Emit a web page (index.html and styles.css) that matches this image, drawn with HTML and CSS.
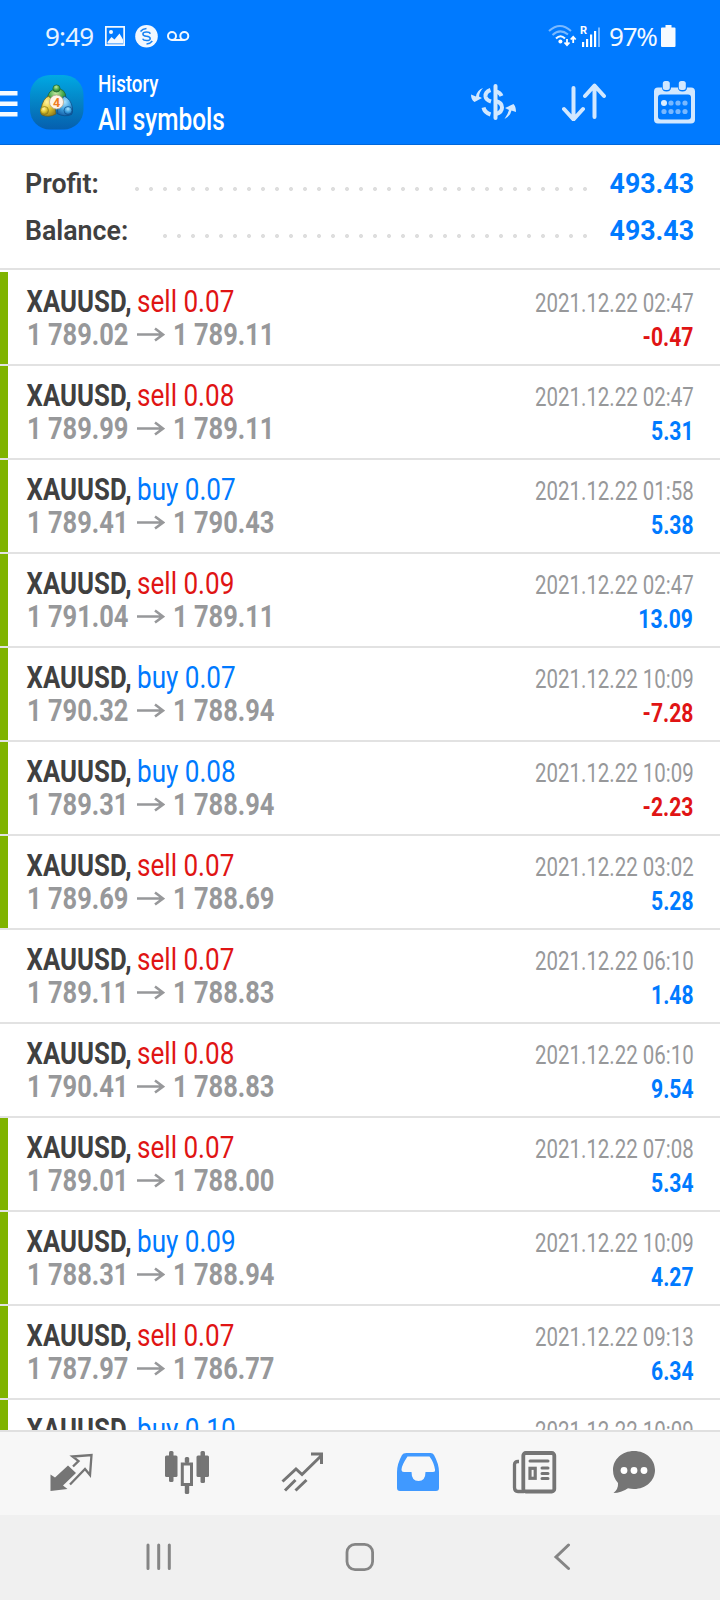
FILE: index.html
```html
<!DOCTYPE html>
<html lang="en">
<head>
<meta charset="utf-8">
<title>History</title>
<link rel="stylesheet" href="styles.css">
</head>
<body>
<svg width="0" height="0" class="defs"><defs>
<symbol id="arrow" viewBox="0 0 28 18"><path d="M0 8.500H26.500M18 2.500l8 6l-8 6" fill="none" stroke="#97989a" stroke-width="2.6"/></symbol>
<radialGradient id="gg" cx=".45" cy=".3" r=".8"><stop offset="0" stop-color="#c5eaa0"/><stop offset=".5" stop-color="#46a84a"/><stop offset="1" stop-color="#14632c"/></radialGradient>
<radialGradient id="gy" cx=".4" cy=".3" r=".8"><stop offset="0" stop-color="#fff2a0"/><stop offset=".5" stop-color="#dfc52f"/><stop offset="1" stop-color="#88741a"/></radialGradient>
<radialGradient id="gb" cx=".5" cy=".3" r=".8"><stop offset="0" stop-color="#a8e2ff"/><stop offset=".5" stop-color="#3c9fdd"/><stop offset="1" stop-color="#0c4f9a"/></radialGradient>
<linearGradient id="bg" x1="0" y1="0" x2="0" y2="1"><stop offset="0" stop-color="#00a9e4"/><stop offset=".5" stop-color="#0483c5"/><stop offset="1" stop-color="#065fae"/></linearGradient>
</defs></svg>
<header class="top">
  <div class="status">
    <span class="clock">9:49</span>
    <svg class="st-left" width="86" height="24" viewBox="0 0 86 24"><path fill="#f2f8ff" fill-rule="evenodd" d="M1 2h20v20h-20zM2.700 3.700v16.600h16.600v-16.600z"/><path fill="#f2f8ff" d="M3.500 18l4-5 3 2.500 5-6 3.500 6v4h-15.500z"/><circle cx="7" cy="8" r="2" fill="#f2f8ff"/><circle cx="42.500" cy="12.200" r="11.300" fill="#f2f8ff"/><path d="M46.300 9.800q-.6-1.800-3.800-1.800q-3.600 0-3.600 2t3.600 2.300t3.700 2.300t-3.700 2q-3 0-3.900-1.900M36.500 7.500q2-2.700 6-3M48.300 17q-2 2.700-5.800 3" fill="none" stroke="#1782f2" stroke-width="1.500"/><g fill="none" stroke="#f2f8ff" stroke-width="2"><circle cx="68" cy="12" r="4"/><circle cx="80.300" cy="12" r="4"/><path d="M68 16h12.300"/></g></svg>
    <svg class="st-right" width="54" height="24" viewBox="0 0 54 24"><g fill="none" stroke-width="2"><path stroke="#7ab9ff" d="M1 7q11-10 22 0M4.500 11q7.500-7 15.500-.5"/><path stroke="#f4f9ff" d="M8 14.500q4.500-4.500 9 0"/></g><circle cx="12.400" cy="17.500" r="2" fill="#fff"/><path d="M19 15v6M16.500 18.500l2.500 2.700 2.500-2.700M25.200 19v-6M22.700 15.500l2.500-2.700 2.500 2.700" fill="none" stroke="#fff" stroke-width="1.800"/><path fill="#fff" d="M34 18h2.200v5h-2.200zM38 15h2.200v8h-2.200zM42 10.500h2.200v12.500h-2.200zM46 7h2.200v16h-2.200z"/><path fill="#7ab9ff" d="M50 3.500h2v19.500h-2z"/><text x="32" y="10" class="roam">R</text></svg>
    <span class="pct">97%</span>
    <svg class="batt" width="15" height="22" viewBox="0 0 15 22"><path fill="#f6faff" d="M4.500 0h6v2.500h3q1 0 1 1v17.500q0 1-1 1h-12.500q-1 0-1-1v-17.500q0-1 1-1h3.500z"/></svg>
  </div>
  <div class="bar">
    <svg class="menu" width="18" height="28" viewBox="0 0 18 28"><path fill="#f5faff" d="M0 1h17.500v4.500h-17.500zM0 11.500h17.500v4.500h-17.500zM0 22h17.500v4.500h-17.500z"/></svg>
    <svg class="logo" width="54" height="55" viewBox="0 0 54 55"><rect width="53.500" height="54.500" rx="20" fill="url(#bg)"/><path d="M17.500 24q0-9 9-10t9.500 9l-4 5h-12z" fill="url(#gg)" stroke="#195f2c" stroke-width=".7"/><circle cx="26.500" cy="13.500" r="3.600" fill="url(#gg)" stroke="#195f2c" stroke-width=".6"/><path d="M19 21q-6 2-8 13q-1 5 1 6q7 3 14-1l-1-8z" fill="url(#gy)" stroke="#665c20" stroke-width=".7"/><circle cx="14.500" cy="35.500" r="4" fill="url(#gy)" stroke="#8a7a20" stroke-width=".7"/><path d="M34 21q7 3 8.500 12q.5 5-1 6.500q-7 3-14.500-1l1-7z" fill="url(#gb)" stroke="#0c4a86" stroke-width=".7"/><circle cx="38" cy="35.500" r="4" fill="url(#gb)" stroke="#0c4f8d" stroke-width=".7"/><circle cx="26.500" cy="27" r="7" fill="#fff4e8" stroke="#b9a68d" stroke-width=".8"/><text x="26.500" y="31.500" text-anchor="middle" class="four">4</text></svg>
    <div class="titles"><span class="t1">History</span><span class="t2">All symbols</span></div>
    <svg class="i-dollar" width="48" height="38" viewBox="0 0 48 38"><g fill="none" stroke="#d2e8ff" stroke-width="4"><path stroke-linecap="round" d="M25.500 3v32"/><path d="M20.500 7Q15 9 15.500 13.500Q16 17 21 18.500M25 8.500q5 .5 6.500 4.500M25.500 18q6.500 1.500 6.500 6.500T26 31M13.500 24.500q1 5 7 7"/></g><path fill="#d2e8ff" d="M13 5q-6 2-7 8.500L1 11.500q0 5.500 3.500 7.500l7.500-4l-3-1.500q0-4 4-8.500zM34.500 36q6-3 7-8.500l4.500 1.500q0-5.500-2.500-8l-8.500 4l4 2q-1 4-4.500 9z"/></svg>
    <svg class="i-sort" width="44" height="38" viewBox="0 0 44 38"><path d="M11.500 5v31M2 26l9.500 10.500l9.500-10.500M32.500 34v-31M23 13l9.500-10.500l9.500 10.500" fill="none" stroke="#d2e8ff" stroke-width="4" stroke-linecap="round" stroke-linejoin="round"/></svg>
    <svg class="i-cal" width="42" height="44" viewBox="0 0 42 44"><path fill="#d2e8ff" fill-rule="evenodd" d="M4 7.500h4q0 4 4.500 4t4.500-4h7q0 4 4.500 4t4.500-4h4q4 0 4 4v28q0 4-4 4h-33q-4 0-4-4v-28q0-4 4-4zM7 14.500q-3 0-3 3v19q0 3 3 3h27q3 0 3-3v-19q0-3-3-3z"/><rect x="8.800" y="1" width="7" height="9" rx="2.500" fill="#d2e8ff"/><rect x="24.800" y="1" width="7" height="9" rx="2.500" fill="#d2e8ff"/><g fill="#79b8ff"><circle cx="17" cy="23" r="2.600"/><circle cx="24" cy="23" r="2.600"/><circle cx="31" cy="23" r="2.600"/><circle cx="10" cy="31.500" r="2.600"/><circle cx="17" cy="31.500" r="2.600"/><circle cx="24" cy="31.500" r="2.600"/><circle cx="31" cy="31.500" r="2.600"/></g><circle cx="10" cy="23" r="3" fill="#dceeff"/></svg>
  </div>
</header>
<section class="summary">
  <div class="sum"><b>Profit:</b><i class="dots d1"></i><strong>493.43</strong></div>
  <div class="sum"><b>Balance:</b><i class="dots d2"></i><strong>493.43</strong></div>
</section>
<main class="list">
  <article class="deal mark"><div class="line"><span class="sym">XAUUSD,</span><span class="side neg">sell 0.07</span><time>2021.12.22 02:47</time></div><div class="line"><span class="from">1 789.02</span><svg class="arr"><use href="#arrow"/></svg><span class="to">1 789.11</span><span class="res neg">-0.47</span></div></article>
  <article class="deal mark"><div class="line"><span class="sym">XAUUSD,</span><span class="side neg">sell 0.08</span><time>2021.12.22 02:47</time></div><div class="line"><span class="from">1 789.99</span><svg class="arr"><use href="#arrow"/></svg><span class="to">1 789.11</span><span class="res">5.31</span></div></article>
  <article class="deal mark"><div class="line"><span class="sym">XAUUSD,</span><span class="side">buy 0.07</span><time>2021.12.22 01:58</time></div><div class="line"><span class="from">1 789.41</span><svg class="arr"><use href="#arrow"/></svg><span class="to">1 790.43</span><span class="res">5.38</span></div></article>
  <article class="deal mark"><div class="line"><span class="sym">XAUUSD,</span><span class="side neg">sell 0.09</span><time>2021.12.22 02:47</time></div><div class="line"><span class="from">1 791.04</span><svg class="arr"><use href="#arrow"/></svg><span class="to">1 789.11</span><span class="res">13.09</span></div></article>
  <article class="deal mark"><div class="line"><span class="sym">XAUUSD,</span><span class="side">buy 0.07</span><time>2021.12.22 10:09</time></div><div class="line"><span class="from">1 790.32</span><svg class="arr"><use href="#arrow"/></svg><span class="to">1 788.94</span><span class="res neg">-7.28</span></div></article>
  <article class="deal mark"><div class="line"><span class="sym">XAUUSD,</span><span class="side">buy 0.08</span><time>2021.12.22 10:09</time></div><div class="line"><span class="from">1 789.31</span><svg class="arr"><use href="#arrow"/></svg><span class="to">1 788.94</span><span class="res neg">-2.23</span></div></article>
  <article class="deal mark"><div class="line"><span class="sym">XAUUSD,</span><span class="side neg">sell 0.07</span><time>2021.12.22 03:02</time></div><div class="line"><span class="from">1 789.69</span><svg class="arr"><use href="#arrow"/></svg><span class="to">1 788.69</span><span class="res">5.28</span></div></article>
  <article class="deal"><div class="line"><span class="sym">XAUUSD,</span><span class="side neg">sell 0.07</span><time>2021.12.22 06:10</time></div><div class="line"><span class="from">1 789.11</span><svg class="arr"><use href="#arrow"/></svg><span class="to">1 788.83</span><span class="res">1.48</span></div></article>
  <article class="deal"><div class="line"><span class="sym">XAUUSD,</span><span class="side neg">sell 0.08</span><time>2021.12.22 06:10</time></div><div class="line"><span class="from">1 790.41</span><svg class="arr"><use href="#arrow"/></svg><span class="to">1 788.83</span><span class="res">9.54</span></div></article>
  <article class="deal mark"><div class="line"><span class="sym">XAUUSD,</span><span class="side neg">sell 0.07</span><time>2021.12.22 07:08</time></div><div class="line"><span class="from">1 789.01</span><svg class="arr"><use href="#arrow"/></svg><span class="to">1 788.00</span><span class="res">5.34</span></div></article>
  <article class="deal mark"><div class="line"><span class="sym">XAUUSD,</span><span class="side">buy 0.09</span><time>2021.12.22 10:09</time></div><div class="line"><span class="from">1 788.31</span><svg class="arr"><use href="#arrow"/></svg><span class="to">1 788.94</span><span class="res">4.27</span></div></article>
  <article class="deal mark"><div class="line"><span class="sym">XAUUSD,</span><span class="side neg">sell 0.07</span><time>2021.12.22 09:13</time></div><div class="line"><span class="from">1 787.97</span><svg class="arr"><use href="#arrow"/></svg><span class="to">1 786.77</span><span class="res">6.34</span></div></article>
  <article class="deal mark"><div class="line"><span class="sym">XAUUSD,</span><span class="side">buy 0.10</span><time>2021.12.22 10:09</time></div></article>
</main>
<nav class="tabs">
  <svg width="46" height="46" viewBox="0 0 46 46"><path fill="#757575" d="M2.500 24.500l4.500 3L20 15.500l8 7.500L15 35.500l4.500 3.500L2.500 41z"/><path d="M25 16.500l5.500-5.500-6-4.500L43.500 5 42 25l-5-6L22 34.500" fill="none" stroke="#757575" stroke-width="2.300"/></svg>
  <svg width="46" height="46" viewBox="0 0 46 46"><g fill="#757575"><rect x="1" y="5.500" width="12.500" height="21.500" rx="1.500"/><rect x="5" y="1" width="4.500" height="31" rx="1.500"/><rect x="32.500" y="5.500" width="12.500" height="21.500" rx="1.500"/><rect x="36.500" y="1" width="4.500" height="32" rx="1.500"/><rect x="20.800" y="7" width="4.400" height="6" rx="1.500"/><rect x="20.800" y="34" width="4.400" height="10" rx="1.500"/></g><rect x="18.300" y="14" width="9.200" height="20.500" fill="none" stroke="#757575" stroke-width="3"/></svg>
  <svg width="46" height="46" viewBox="0 0 46 46"><path d="M2.500 31.500L16 19l6 5.500L42 5M31 4h10.500v10M5 40.500L15.500 30M15.500 40.500L26.500 30" fill="none" stroke="#757575" stroke-width="3"/></svg>
  <svg width="46" height="46" viewBox="0 0 46 46"><path fill="#4099ff" fill-rule="evenodd" d="M10.500 3h24q2.500 0 3.500 2q5 9 5 17v16q0 3-3 3h-36q-3 0-3-3v-16q0-8 5-17q1-2 4.500-2zM11.500 6.500q-6 9-6 13q0 2.500 2.500 2.500h7.500q0 9 7 9t7-9h7.500q2.500 0 2-2.500q-1-7-5.500-13z"/></svg>
  <svg width="46" height="46" viewBox="0 0 46 46"><rect x="11.300" y="3" width="31" height="38.500" rx="2.500" fill="none" stroke="#757575" stroke-width="3.800"/><path d="M7 11.500H6q-3.500 0-3.500 3v23q0 4 3.500 4h6" fill="none" stroke="#757575" stroke-width="3.300"/><path d="M18 11h18M30 18h6M30 23.500h6M30 28.500h6" stroke="#757575" stroke-width="3" stroke-linecap="round"/><rect x="18" y="18.300" width="5.200" height="10" fill="none" stroke="#757575" stroke-width="3.200"/></svg>
  <svg width="46" height="46" viewBox="0 0 46 46"><path fill="#757575" d="M23 1c12 0 21 8.500 21 19s-9 19-21 19q-3 0-6-.8Q10 43 2.500 43q5-4 4.500-10Q2 27.500 2 20C2 9.500 11 1 23 1z"/><g fill="#fff"><circle cx="13" cy="20.500" r="3.400"/><circle cx="23" cy="20.500" r="3.400"/><circle cx="33" cy="20.500" r="3.400"/></g></svg>
</nav>
<footer class="sys">
  <svg width="28" height="28" viewBox="0 0 28 28"><path d="M3 2v23.500M13.700 2v23.500M24.300 2v23.500" stroke="#858585" stroke-width="3" stroke-linecap="round"/></svg>
  <svg width="30" height="30" viewBox="0 0 30 30"><rect x="2" y="2.300" width="25.600" height="25.300" rx="8" fill="none" stroke="#858585" stroke-width="2.800"/></svg>
  <svg class="back" width="18" height="28" viewBox="0 0 18 28"><path d="M15.500 2L3 14l12.500 11.500" fill="none" stroke="#858585" stroke-width="3" stroke-linecap="round"/></svg>
</footer>
</body>
</html>
```
FILE: styles.css
```css
* { box-sizing: border-box; }
body { margin: 0; width: 720px; height: 1600px; overflow: hidden; background: #fff; font-family: Roboto, "Liberation Sans", sans-serif; color: #404040; display: flex; flex-direction: column; }
.defs { position: absolute; }
svg { display: block; flex: none; }
.top { flex: none; height: 145px; background: #007aff; color: #fff; border-bottom: 1px solid #0068dc; }
.status { height: 72px; padding: 0 44px 0 45px; display: flex; align-items: center; }
.clock { width: 59px; font: 26px "Noto Sans", sans-serif; color: #e8f3ff; letter-spacing: -.8px; }
.st-right { margin-left: auto; }
.pct { width: 52px; margin-left: 7px; font: 26px "Noto Sans", sans-serif; letter-spacing: -1.2px; color: #f2f8ff; }
.roam { font: bold 11px Roboto; fill: #fff; }
.four { font: bold 12.500px Roboto; fill: #f07a20; }
.bar { height: 72px; display: flex; padding-right: 24px; }
.menu { margin-top: 18px; }
.logo { margin: 3px 0 0 11.500px; }
.titles { width: 160px; margin-left: 14.500px; display: flex; flex-direction: column; align-items: flex-start; }
.titles span { transform: scaleX(.8); transform-origin: 0 0; white-space: nowrap; font-weight: 500; }
.t1 { font-size: 23.500px; line-height: 25px; }
.t2 { font-size: 30.500px; line-height: 45px; }
.i-dollar { margin: 11px 0 0 212px; }
.i-sort { margin: 11px 0 0 44px; }
.i-cal { margin: 8px 0 0 auto; }
.summary { flex: none; height: 125px; padding: 15px 25px 0 24.500px; border-bottom: 2px solid #e2e2e2; }
.sum { height: 47px; display: flex; align-items: center; font-size: 27px; line-height: 47px; white-space: nowrap; }
.sum b { font-weight: 600; transform: translateY(.6px) scaleX(.99); transform-origin: 0 0; }
.sum strong { width: 84px; display: flex; justify-content: flex-end; color: #007aff; font-weight: 700; transform: translate(-1px, .6px) scaleX(.99); transform-origin: 100% 0; }
.dots { height: 6px; margin: 10px 19.500px 0 auto; background: radial-gradient(circle at 7px 3px, #dedede 1.700px, transparent 2.300px) right 0 top 0 / 14px 6px; }
.d1 { width: 462px; }
.d2 { width: 434px; }
.list { flex: none; height: 1160px; padding-top: 2px; overflow: hidden; }
.deal { height: 94px; border-bottom: 2px solid #e2e2e2; padding: 13px 27px 0; background: linear-gradient(#fff, #fff) padding-box; }
.mark { background: linear-gradient(90deg, #7fb300 7.700px, #fff 7.700px) padding-box; }
.line { display: flex; align-items: baseline; height: 33px; line-height: 33px; font-size: 30.500px; white-space: nowrap; }
.line span, .line time { transform: translateY(-.4px) scaleX(.835); transform-origin: 0 0; }
.sym { width: 110px; font-weight: 700; }
.line .sym { transform: translate(-.4px, -.4px) scaleX(.845); }
.side { color: #007aff; }
.line .side { transform: translateY(-.4px) scaleX(.855); }
.from { width: 109.500px; font-weight: 700; color: #97989a; }
.arr { width: 28px; height: 18px; align-self: center; }
.to { margin-left: 8px; font-weight: 700; color: #97989a; }
.line time, .line .res { margin-left: auto; transform-origin: 100% 0; font-size: 25px; }
.line time { color: #97989a; transform: translateX(.7px) scaleX(.818); }
.line .res { transform: translate(.3px, .9px) scaleX(.845); }
.res { font-weight: 700; color: #007aff; }
.line .neg { color: #e01414; }
.tabs { flex: none; height: 85px; padding: 18px 0 0 48px; background: #f7f7f7; border-top: 2px solid #e0e0e0; display: flex; gap: 70px; }
.tabs svg:last-child { margin-left: -17px; }
.sys { flex: 1; background: #f0f0f0; padding: 0 0 2px 145px; display: flex; align-items: center; gap: 172px; }
.back { margin-left: 6px; }
```
